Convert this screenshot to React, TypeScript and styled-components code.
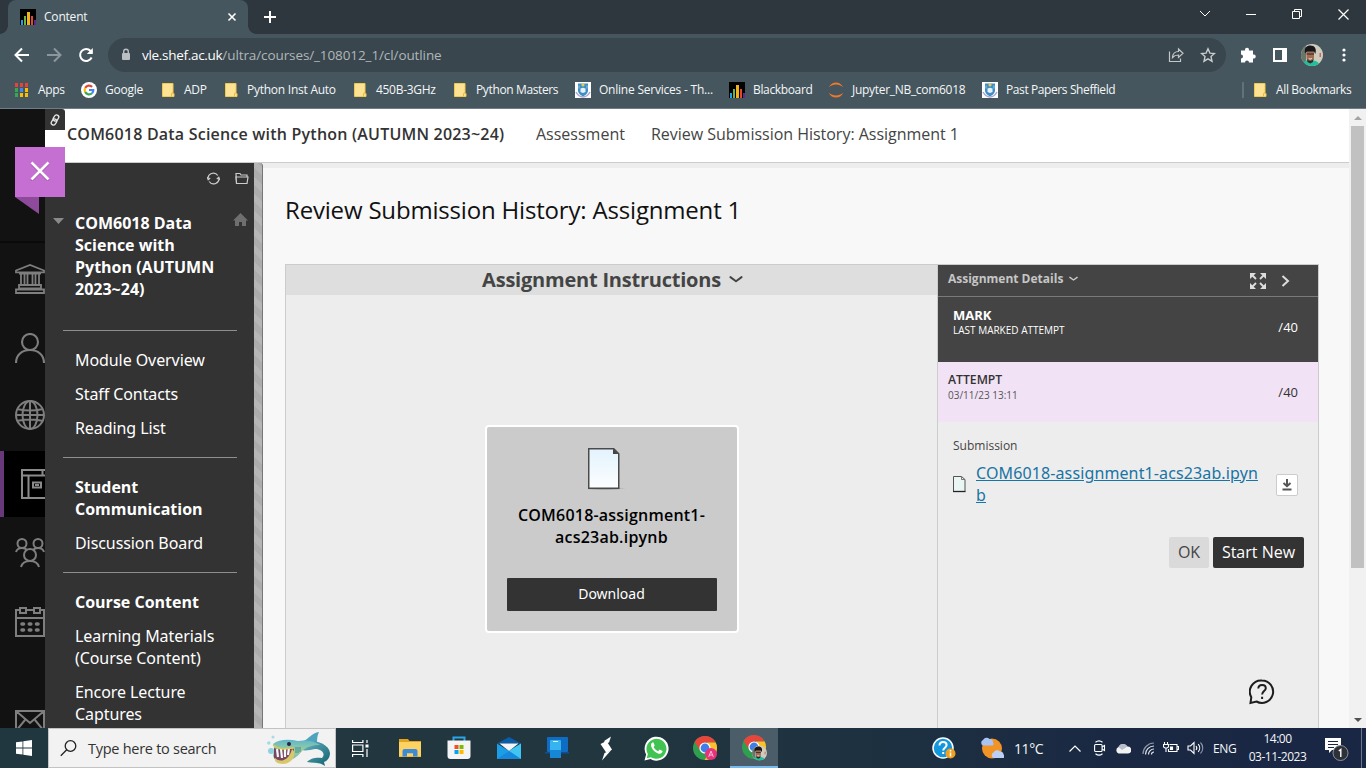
import React from "react";
import styled, { createGlobalStyle } from "styled-components";

const Global = createGlobalStyle`
  * { box-sizing: border-box; }
  html, body { margin: 0; padding: 0; overflow: hidden; }
  body { font-family: "Noto Sans", "Open Sans", sans-serif; font-size: 16px; }
  svg { display: block; flex: none; }
  button { font-family: inherit; border: 0; padding: 0; margin: 0; }
`;

const Screen = styled.div`
  width: 1366px;
  height: 768px;
  display: flex;
  flex-direction: column;
  overflow: hidden;
`;

/* ---------- browser chrome ---------- */
const UiText = styled.span<{ $size?: number; $ls?: number; $color?: string }>`
  font-family: "Open Sans", sans-serif;
  font-size: ${(p) => p.$size ?? 12}px;
  letter-spacing: ${(p) => p.$ls ?? 0}px;
  color: ${(p) => p.$color ?? "#f4f6f7"};
  white-space: pre;
`;

const TabStrip = styled.div`
  height: 34px;
  flex: none;
  display: flex;
  background: #2d373d;
  padding-left: 8px;
`;
const Tab = styled.div`
  width: 240px;
  height: 34px;
  display: flex;
  align-items: center;
  background: #46565f;
  border-radius: 8px 8px 0 0;
  padding: 0 11px 0 12px;
  position: relative;
  &::before, &::after {
    content: "";
    position: absolute;
    bottom: 0;
    width: 8px;
    height: 8px;
  }
  &::before { left: -8px; background: radial-gradient(circle at 0 0, transparent 7.5px, #46565f 8px); }
  &::after { right: -8px; background: radial-gradient(circle at 100% 0, transparent 7.5px, #46565f 8px); }
`;
const TabTitle = styled(UiText)`
  flex: 1;
  margin-left: 8px;
  padding-bottom: 1px;
`;
const NewTab = styled.div`
  width: 44px;
  display: flex;
  align-items: center;
  justify-content: center;
`;
const WindowControls = styled.div`
  margin-left: auto;
  display: flex;
`;
const WindowButton = styled.div`
  width: 46px;
  height: 28px;
  display: flex;
  align-items: center;
  justify-content: center;
`;

const Toolbar = styled.div`
  height: 38px;
  flex: none;
  display: flex;
  align-items: center;
  background: #46565f;
  padding-top: 4px;
`;
const NavButtons = styled.div`
  width: 108px;
  display: flex;
  padding-left: 14px;
  gap: 16px;
`;
const Omnibox = styled.div`
  width: 1118px;
  height: 34px;
  border-radius: 17px;
  background: #39464d;
  display: flex;
  align-items: center;
  padding: 0 10px 0 12px;
`;
const Url = styled.div`
  flex: 1;
  margin-left: 10px;
  display: flex;
`;
const OmniActions = styled.div`
  display: flex;
  gap: 16px;
`;
const ToolbarActions = styled.div`
  flex: 1;
  display: flex;
  align-items: center;
  padding-left: 14px;
`;
const Slot = styled.div<{ $w: number }>`
  width: ${(p) => p.$w}px;
  flex: none;
  display: flex;
  align-items: center;
  justify-content: flex-start;
`;

const BookmarkBar = styled.div`
  height: 37px;
  flex: none;
  display: flex;
  background: #46565f;
  border-bottom: 1px solid #6f7d85;
  padding-left: 14px;
`;
const Bookmark = styled.div<{ $w: number }>`
  width: ${(p) => p.$w}px;
  height: 36px;
  flex: none;
  display: flex;
  align-items: center;
  gap: 8px;
`;
const BookmarkLabel = styled(UiText)`
  padding-bottom: 1px;
`;
const AllBookmarks = styled.div`
  margin-left: auto;
  width: 124px;
  height: 36px;
  display: flex;
  align-items: center;
  gap: 8px;
`;
const BookmarkRule = styled.div`
  width: 2px;
  height: 16px;
  background: #63727a;
`;

/* ---------- page ---------- */
const Page = styled.div`
  height: 619px;
  flex: none;
  display: flex;
  position: relative;
  background: #f8f8f8;
  overflow: hidden;
`;
const Rail = styled.nav`
  width: 45px;
  flex: none;
  background: #121212;
  display: flex;
  flex-direction: column;
  gap: 3px;
  overflow: hidden;
`;
const RailHead = styled.div`
  height: 134px;
  flex: none;
  border-bottom: 2px solid #0a0a0a;
`;
const RailItem = styled.div<{ $active?: boolean; $h?: number; $lift?: number; $before?: number }>`
  height: ${(p) => p.$h ?? 66}px;
  flex: none;
  margin-top: ${(p) => p.$before ?? 0}px;
  padding-left: ${(p) => (p.$active ? 17 : 15)}px;
  padding-bottom: ${(p) => p.$lift ?? 0}px;
  display: flex;
  align-items: center;
  background: ${(p) => (p.$active ? "#000" : "transparent")};
  border-left: ${(p) => (p.$active ? "4px solid #68397a" : "0")};
`;
const CloseFlag = styled.div`
  position: absolute;
  left: 15px;
  top: 38px;
  width: 50px;
`;
const CloseButton = styled.div`
  height: 50px;
  background: #c56fd3;
  display: flex;
  align-items: center;
  justify-content: center;
  padding-bottom: 2px;
`;
const FlagFold = styled.div`
  width: 24px;
  height: 17px;
  background: #8e4a9b;
  clip-path: polygon(0 0, 100% 0, 100% 100%);
`;

const Body = styled.div`
  flex: 1;
  display: flex;
  flex-direction: column;
  min-width: 0;
`;
const Crumbs = styled.header`
  height: 54px;
  flex: none;
  display: flex;
  background: #fff;
  border-bottom: 1px solid #ccc;
  line-height: 50px;
  color: #333;
`;
const LinkBadge = styled.div`
  width: 20px;
  height: 21px;
  background: #333;
  border-top-right-radius: 3px;
  display: flex;
  align-items: center;
  justify-content: center;
`;
const Crumb = styled.span<{ $w: number; $bold?: boolean; $ls?: number }>`
  width: ${(p) => p.$w}px;
  flex: none;
  font-family: "Open Sans", sans-serif;
  font-weight: ${(p) => (p.$bold ? 600 : 400)};
  letter-spacing: ${(p) => p.$ls ?? 0}px;
  color: ${(p) => (p.$bold ? "#333" : "#444")};
  white-space: nowrap;
  &:nth-child(2) { margin-left: 2px; }
`;
const Columns = styled.div`
  flex: 1;
  display: flex;
  min-height: 0;
`;
const Sidebar = styled.aside`
  width: 209px;
  flex: none;
  background: #333;
  color: #fff;
  line-height: 22px;
  overflow: hidden;
`;
const SidebarTools = styled.div`
  height: 49px;
  display: flex;
  gap: 15px;
  padding: 9px 0 0 162px;
`;
const CourseTitle = styled.div`
  display: flex;
  align-items: flex-start;
  height: 118px;
  padding-left: 8px;
`;
const CourseName = styled.div`
  width: 148px;
  flex: none;
  margin: 0 10px 0 11px;
  font-weight: 700;
  font-family: "Open Sans", sans-serif;
`;
const Rule = styled.div`
  width: 174px;
  height: 1px;
  margin-left: 18px;
  background: #8e8e8e;
`;
const Menu = styled.div`
  padding: 12px 0 12px 30px;
`;
const MenuItem = styled.div<{ $bold?: boolean }>`
  width: 150px;
  padding: 6px 0;
  font-weight: ${(p) => (p.$bold ? 700 : 400)};
  font-family: ${(p) => (p.$bold ? '"Open Sans"' : '"Noto Sans"')}, sans-serif;
  letter-spacing: ${(p) => (p.$bold ? 0 : -0.08)}px;
`;
const Splitter = styled.div`
  width: 9px;
  flex: none;
  border-right: 1px solid #777;
  border-top-right-radius: 3px;
  background: repeating-linear-gradient(45deg, #b6b6b6 0 6px, #acacac 6px 12px);
`;
const Content = styled.main`
  flex: 1;
  min-width: 0;
  border-top: 5px solid #ededed;
  padding: 0 30px 0 22px;
  display: flex;
  flex-direction: column;
`;
const Title = styled.h1`
  margin: 0;
  height: 96px;
  padding-top: 25px;
  line-height: 33px;
  font-family: "Open Sans", sans-serif;
  font-size: 24px;
  font-weight: 400;
  letter-spacing: -0.18px;
  color: #111;
  white-space: nowrap;
`;
const Panel = styled.section`
  flex: 1;
  display: flex;
  border: 1px solid #ccc;
  border-bottom: 0;
  background: #ededed;
`;
const Viewer = styled.div`
  width: 652px;
  border-right: 1px solid #ccc;
  display: flex;
  flex-direction: column;
  align-items: center;
`;
const ViewerHead = styled.div`
  width: 100%;
  height: 30px;
  background: #dedede;
  color: #444;
  font-family: "Open Sans", sans-serif;
  font-size: 20px;
  letter-spacing: -0.22px;
  font-weight: 700;
  display: flex;
  align-items: center;
  justify-content: center;
  gap: 8px;
  padding: 0 0 2px 2px;
  white-space: nowrap;
`;
const FileCard = styled.div`
  width: 254px;
  height: 208px;
  margin-top: 130px;
  border: 2px solid #fff;
  border-radius: 4px;
  background: #cbcbcb;
  display: flex;
  flex-direction: column;
  align-items: center;
  padding-top: 20px;
`;
const FileName = styled.div`
  margin-top: 13px;
  line-height: 22px;
  font-family: "Open Sans", sans-serif;
  font-weight: 600;
  letter-spacing: 0.21px;
  text-align: center;
  color: #000;
`;
const DownloadButton = styled.button`
  width: 210px;
  height: 33px;
  margin-top: 30px;
  padding-bottom: 2px;
  background: #333;
  color: #fff;
  font-size: 14px;
  border-radius: 1px;
`;
const Details = styled.div`
  flex: 1;
  display: flex;
  flex-direction: column;
  font-family: "Open Sans", sans-serif;
  position: relative;
`;
const DetailsHead = styled.div`
  height: 32px;
  background: #444;
  border-bottom: 1px solid #7a7a7a;
  display: flex;
  align-items: center;
  padding: 0 28px 0 10px;
`;
const DetailsLabel = styled.div`
  flex: 1;
  display: flex;
  align-items: center;
  gap: 6px;
  padding-bottom: 4px;
  font-size: 12px;
  font-weight: 700;
  color: #c6c6c6;
  white-space: nowrap;
`;
const ScoreRow = styled.div<{ $dark?: boolean }>`
  height: ${(p) => (p.$dark ? 65 : 60)}px;
  background: ${(p) => (p.$dark ? "#444" : "#f1e2f5")};
  color: ${(p) => (p.$dark ? "#fff" : "#333")};
  display: flex;
  justify-content: space-between;
  padding: ${(p) => (p.$dark ? "10px 20px 0 15px" : "9px 20px 0 10px")};
`;
const ScoreName = styled.div<{ $bold: number; $size: number }>`
  font-size: ${(p) => p.$size}px;
  line-height: 17px;
  font-weight: ${(p) => p.$bold};
`;
const ScoreSub = styled.div<{ $lh: number; $muted?: boolean }>`
  font-size: 10px;
  line-height: ${(p) => p.$lh}px;
  color: ${(p) => (p.$muted ? "#555" : "inherit")};
`;
const Score = styled.div<{ $top: number }>`
  font-size: 13px;
  line-height: 18px;
  padding-top: ${(p) => p.$top}px;
`;
const Submission = styled.div`
  padding: 15px 20px 0 15px;
`;
const SubmissionLabel = styled.div`
  font-size: 12px;
  line-height: 18px;
  color: #444;
`;
const FileRow = styled.div`
  display: flex;
  align-items: center;
  height: 44px;
  margin-top: 7px;
`;
const FileLink = styled.a`
  width: 286px;
  margin-left: 9px;
  font-family: "Noto Sans", sans-serif;
  line-height: 22px;
  letter-spacing: 0.12px;
  color: #1874a4;
  text-decoration: underline;
  word-break: break-all;
`;
const SaveButton = styled.div`
  width: 22px;
  height: 22px;
  margin: 2px 0 0 auto;
  background: #fff;
  border: 1px solid #ccc;
  border-radius: 2px;
  display: flex;
  align-items: center;
  justify-content: center;
`;
const Actions = styled.div`
  display: flex;
  justify-content: flex-end;
  gap: 4px;
  padding: 31px 14px 0 0;
`;
const ActionButton = styled.button<{ $w: number; $dark?: boolean }>`
  width: ${(p) => p.$w}px;
  height: 31px;
  padding-bottom: 2px;
  border-radius: 2px;
  font-size: 16px;
  background: ${(p) => (p.$dark ? "#333" : "#dadada")};
  color: ${(p) => (p.$dark ? "#fff" : "#444")};
  white-space: nowrap;
`;
const HelpBubble = styled.div`
  position: absolute;
  right: 43px;
  bottom: 23px;
`;
const Scrollbar = styled.div`
  width: 17px;
  flex: none;
  background: #f1f1f1;
  display: flex;
  flex-direction: column;
  align-items: center;
  justify-content: space-between;
`;
const ScrollThumb = styled.div`
  width: 13px;
  height: 442px;
  background: #c1c1c1;
  margin-bottom: auto;
`;
const ScrollArrow = styled.div<{ $down?: boolean }>`
  height: 17px;
  display: flex;
  align-items: center;
  &::after {
    content: "";
    border: 4px solid transparent;
    border-top-width: ${(p) => (p.$down ? 4 : 0)}px;
    border-bottom-width: ${(p) => (p.$down ? 0 : 4)}px;
    border-top-color: ${(p) => (p.$down ? "#505050" : "transparent")};
    border-bottom-color: ${(p) => (p.$down ? "transparent" : "#a3a3a3")};
  }
`;

/* ---------- taskbar ---------- */
const Taskbar = styled.footer`
  height: 40px;
  flex: none;
  display: flex;
  background: linear-gradient(90deg, #213740 0, #22363f 45%, #1d3041 66%, #1a2843 82%, #192745 100%);
`;
const TaskSlot = styled.div<{ $w: number; $active?: boolean }>`
  width: ${(p) => p.$w}px;
  height: 40px;
  flex: none;
  display: flex;
  align-items: center;
  justify-content: center;
  background: ${(p) => (p.$active ? "#4b5d68" : "transparent")};
  border-bottom: ${(p) => (p.$active ? "2px solid #76b9ed" : "0")};
  padding-top: ${(p) => (p.$active ? "2px" : "0")};
`;
const Search = styled.div`
  width: 288px;
  height: 40px;
  flex: none;
  display: flex;
  align-items: center;
  background: #f2f2f2;
  border: 1px solid #c3c3c3;
  padding: 0 4px 0 11px;
`;
const Placeholder = styled(UiText)`
  flex: 1;
  margin-left: 11px;
`;
const Clock = styled.div`
  width: 85px;
  margin-right: 2px;
  display: flex;
  flex-direction: column;
  align-items: center;
  justify-content: center;
  line-height: 18px;
`;
const DesktopEdge = styled.div`
  width: 1px;
  height: 40px;
  margin-left: 11px;
  background: #6c7588;
`;

/* ---------- icons ---------- */
const BarsIcon = () => (
  <svg width="16" height="16" viewBox="0 0 16 16" shapeRendering="crispEdges">
    <rect width="16" height="16" fill="#000" />
    <rect x="1" y="11" width="2" height="5" fill="#18a0e8" />
    <rect x="4" y="7" width="2" height="9" fill="#6db33f" />
    <rect x="7" y="3" width="3" height="13" fill="#f2b21b" />
    <rect x="11" y="7" width="2" height="9" fill="#e4472b" />
    <rect x="14" y="11" width="2" height="5" fill="#5b2a91" />
  </svg>
);
const NoteIcon = () => (
  <svg width="16" height="16" viewBox="0 0 16 16">
    <path d="M2.500 1.500h10.500v10h1v3h-11.500z" fill="#fde293" stroke="#f2c94f" />
    <path d="M11.500 14.500v-2.500a1 1 0 0 1 2 0" fill="none" stroke="#e8b93a" />
  </svg>
);
const CrestIcon = () => (
  <svg width="16" height="16" viewBox="0 0 16 16">
    <rect width="16" height="16" fill="#fff" />
    <path d="M3 1.500h10v7c0 3-3 5-5 6-2-1-5-3-5-6z" fill="#3f8fc4" />
    <path d="M1 10c2 3.500 4.500 5 7 5s5-1.500 7-5" fill="none" stroke="#aaa5cf" strokeWidth="1.500" />
    <path d="M5.500 6.500l2.500-.8 2.500.8V10L8 11l-2.500-1z" fill="#e6f1f8" />
    <path d="M8 1.500v3M6.500 3h3" stroke="#f3d44a" strokeWidth="1.300" />
    <path d="M4 3.500v3M12 3.500v3" stroke="#8fc3e3" />
  </svg>
);
const AppsIcon = () => {
  const colors = ["#ea4335", "#ea4335", "#ea4335", "#34a853", "#4285f4", "#fbbc04", "#34a853", "#fbbc04", "#fbbc04"];
  return (
    <svg width="16" height="16" viewBox="0 0 16 16" shapeRendering="crispEdges">
      {colors.map((c, i) => (
        <rect key={i} x={1 + (i % 3) * 5} y={1 + Math.floor(i / 3) * 5} width="3" height="4" fill={c} />
      ))}
    </svg>
  );
};
const GoogleIcon = () => (
  <svg width="16" height="16" viewBox="0 0 16 16">
    <circle cx="8" cy="8" r="8" fill="#fff" />
    <g fill="none" strokeWidth="2.200">
      <path d="M11.100 4.900A4.400 4.400 0 0 0 4.200 5.900" stroke="#ea4335" />
      <path d="M4.200 5.900a4.400 4.400 0 0 0 0 4.200" stroke="#fbbc04" />
      <path d="M4.200 10.100a4.400 4.400 0 0 0 6.800 1.100" stroke="#34a853" />
      <path d="M11 11.200A4.400 4.400 0 0 0 12.300 8H8" stroke="#4285f4" />
    </g>
  </svg>
);
const JupyterIcon = () => (
  <svg width="16" height="16" viewBox="0 0 16 16" fill="#f37726">
    <path d="M.8 5.300C2.300 2 5 .4 8 .4s5.700 1.600 7.200 4.900C13 3.500 10.500 2.600 8 2.600S3 3.500.8 5.300z" />
    <path d="M.8 10.700c1.500 3.300 4.200 4.900 7.200 4.900s5.700-1.600 7.200-4.900C13 12.500 10.500 13.400 8 13.400s-5-.9-7.200-2.700z" />
  </svg>
);
const Portrait = ({ size }: { size: number }) => (
  <svg width={size} height={size} viewBox="0 0 22 22">
    <defs>
      <clipPath id={`face${size}`}><circle cx="11" cy="11" r="11" /></clipPath>
    </defs>
    <g clipPath={`url(#face${size})`}>
      <rect width="22" height="22" fill="#cfccbb" />
      <rect width="5" height="22" fill="#69776b" />
      <path d="M18.500 9h1.500v4h-1.500z" fill="#c06a70" />
      <path d="M2 22c0-4 2-6 6-6s10 .5 11 6z" fill="#1fc0a0" />
      <path d="M5.500 7h7.500v6c0 3.500-1.700 5.500-3.700 5.500S5.500 16.500 5.500 13z" fill="#a06c52" />
      <path d="M4 9.500c-1-5.500 1.500-8 5.500-8s6.500 3 4.800 8.500L13 7.500H6z" fill="#17161a" />
      <path d="M5.500 9.500h7.500v1H5.500z" fill="#2a2225" />
      <path d="M6 14.500c1 3 5.500 3 6.500 0l-.5 3.500-2.700 1.500L6.500 18z" fill="#3a2722" />
      <path d="M7.800 14.500c1 .7 2 .7 3 0" stroke="#fff" fill="none" />
    </g>
  </svg>
);
const ChromeIcon = () => (
  <>
    <circle cx="12" cy="12" r="12" fill="#2f9e4f" />
    <path d="M12 6.500h10.700A12 12 0 0 0 1.700 5.900l5.500 8.900z" fill="#e8453c" />
    <path d="M22.700 6.500A12 12 0 0 1 11.600 24l5.200-9.200L14 6.500z" fill="#fbc02d" />
    <circle cx="12" cy="12" r="5.600" fill="#fff" />
    <circle cx="12" cy="12" r="4.400" fill="#3f7ee8" />
  </>
);

const BankIcon = () => (
  <svg width="30" height="30" viewBox="0 0 30 30" fill="none" stroke="#7e7e7e" strokeWidth="1.800">
    <path d="M1 6.500L15 1l14 5.500v1.800H1zM4 9.700h22" />
    <path d="M6 10v10M9.500 10v10M12.500 10v10M17.500 10v10M20.500 10v10M24 10v10" />
    <path d="M4 21h22v3.500H4zM1 25.500h28V29H1z" />
  </svg>
);
const PersonIcon = () => (
  <svg width="30" height="30" viewBox="0 0 30 30" fill="none" stroke="#7e7e7e" strokeWidth="2.100">
    <circle cx="15" cy="9" r="8" />
    <path d="M1 30c0-8 6-13 14-13s14 5 14 13" />
  </svg>
);
const GlobeIcon = () => (
  <svg width="30" height="30" viewBox="0 0 30 30" fill="none" stroke="#7e7e7e" strokeWidth="2">
    <circle cx="15" cy="15" r="14" />
    <ellipse cx="15" cy="15" rx="7.500" ry="14" />
    <path d="M15 1v28M1 15h28M3 9.300c7 1.500 17 1.500 24 0M3 20.700c7-1.500 17-1.500 24 0" />
  </svg>
);
const BookIcon = () => (
  <svg width="30" height="30" viewBox="0 0 30 30" fill="none" stroke="#8a8a8a" strokeWidth="2">
    <path d="M29 1H1v28h28M1 6.500h28M7.500 6.500V29M21.500 1v5.500M12 13.500h8v5h-8zM14 16h4" />
  </svg>
);
const PeopleIcon = () => (
  <svg width="30" height="30" viewBox="0 0 30 30" fill="none" stroke="#7e7e7e" strokeWidth="2">
    <circle cx="7" cy="5.500" r="4.500" />
    <circle cx="23" cy="5.500" r="4.500" />
    <circle cx="15" cy="17" r="6" />
    <path d="M1 14c.8-2.600 3-4 6-4 2.400 0 4 .8 5 2M29 14c-.8-2.600-3-4-6-4-2.400 0-4 .8-5 2M6 29c1-3.700 4.500-6 9-6s8 2.300 9 6" />
  </svg>
);
const CalendarIcon = () => (
  <svg width="30" height="30" viewBox="0 0 30 30" fill="none" stroke="#7e7e7e" strokeWidth="2">
    <path d="M5 3H1v26h28V3h-4M12 3h6M1 11h28M5 1h6v5H5zM19 1h6v5h-6z" />
    <path d="M7 17h1.500M14.300 17h1.500M21.500 17h1.500M7 23h1.500M14.300 23h1.500M21.500 23h1.500" strokeWidth="3.600" strokeLinecap="round" />
  </svg>
);
const MailIcon = () => (
  <svg width="30" height="30" viewBox="0 0 30 30" fill="none" stroke="#7e7e7e" strokeWidth="2">
    <path d="M1 1h28v22H1zM1 1l14 12L29 1M1 21l9-11M29 21l-9-11" />
  </svg>
);
const ChevronDown = ({ w, color, sw }: { w: number; color: string; sw: number }) => (
  <svg width={w} height={w * 0.6} viewBox="0 0 10 6" fill="none" stroke={color} strokeWidth={sw}>
    <path d="M1 1.500l4 3 4-3" strokeLinecap="round" strokeLinejoin="round" />
  </svg>
);

const SharkIcon = () => (
  <svg width="64" height="36" viewBox="0 0 64 36">
    <defs>
      <linearGradient id="skin" x1="0" y1="0" x2="0" y2="1">
        <stop offset="0" stopColor="#5bb6cf" />
        <stop offset=".5" stopColor="#9fcf98" />
        <stop offset="1" stopColor="#6cb6bd" />
      </linearGradient>
      <linearGradient id="tail" x1="0" y1="0" x2="1" y2="1">
        <stop offset="0" stopColor="#6ab8c8" />
        <stop offset="1" stopColor="#12616e" />
      </linearGradient>
    </defs>
    <path d="M37 11c4-2 8-8 15-9-2 4-2 8-2 12z" fill="#4ea3bd" />
    <path d="M34 11c12-2 28 2 29 12 0 5-3 8-6 9l1 4c-5-4-12-3-18-4 3-4 10-5 15-4 4-4 0-9-7-9-5 1-9 2-14 1z" fill="url(#tail)" />
    <path d="M6 14c6-5 16-5 25-3 8-1 17 0 22 4-7 0-13 2-17 5-4 5-9 10-17 11-7 1-12-2-13-5l1-9z" fill="url(#skin)" />
    <path d="M7 18c7 3 15 1 20 0 0 8-4 13-10 13-5 0-10-1-10-4z" fill="#7b4560" />
    <path d="M8 28c5 5 14 3 17-9 6 5 0 15-9 15-5 0-9-2-8-6z" fill="#d8c869" />
    <path d="M10 19l1 8M14 19l1 9M18 19l0 8M22 18l-1 7" stroke="#effafa" strokeWidth="2.200" fill="none" />
    <path d="M6 15c6 5 13 4 21 3" stroke="#d6c85f" strokeWidth="1.500" fill="none" />
    <circle cx="22" cy="14" r="2" fill="#2a2440" />
    <path d="M29 17v6M31 17v6M33 17v5" stroke="#39899d" />
    <circle cx="4" cy="21" r="3" fill="#8fd0df" />
    <circle cx="1.800" cy="13" r="1.800" fill="#a5dbe6" />
    <circle cx="6" cy="7" r="1.500" fill="#a5dbe6" />
  </svg>
);

const bookmarks: { label: string; w: number; icon: React.ReactNode; ls: number }[] = [
  { label: "Apps", w: 67, icon: <AppsIcon />, ls: -0.3 },
  { label: "Google", w: 79, icon: <GoogleIcon />, ls: -0.25 },
  { label: "ADP", w: 63, icon: <NoteIcon />, ls: -0.3 },
  { label: "Python Inst Auto", w: 129, icon: <NoteIcon />, ls: -0.25 },
  { label: "450B-3GHz", w: 100, icon: <NoteIcon />, ls: -0.3 },
  { label: "Python Masters", w: 123, icon: <NoteIcon />, ls: -0.37 },
  { label: "Online Services - Th...", w: 154, icon: <CrestIcon />, ls: -0.22 },
  { label: "Blackboard", w: 99, icon: <BarsIcon />, ls: -0.35 },
  { label: "Jupyter_NB_com6018", w: 154, icon: <JupyterIcon />, ls: -0.3 },
  { label: "Past Papers Sheffield", w: 150, icon: <CrestIcon />, ls: -0.4 },
];

export default function App() {
  return (
    <Screen>
      <Global />
      <TabStrip>
        <Tab>
          <BarsIcon />
          <TabTitle $ls={-0.2}>Content</TabTitle>
          <svg width="10" height="10" viewBox="0 0 10 10" stroke="#fff" strokeWidth="1.600"><path d="M1.500 1.500l7 7M8.500 1.500l-7 7" /></svg>
        </Tab>
        <NewTab>
          <svg width="12" height="12" viewBox="0 0 12 12" stroke="#fff" strokeWidth="2"><path d="M6 0v12M0 6h12" /></svg>
        </NewTab>
        <WindowControls>
          <WindowButton><svg width="12" height="8" viewBox="0 0 12 8" fill="none" stroke="#fff"><path d="M1 1l5 5 5-5" /></svg></WindowButton>
          <WindowButton><svg width="10" height="2" viewBox="0 0 10 2"><path d="M0 1.500h10" stroke="#fff" /></svg></WindowButton>
          <WindowButton><svg width="10" height="10" viewBox="0 0 10 10" fill="none" stroke="#fff"><path d="M.5 2.500h7v7h-7zM2.500 2.500v-2h7v7h-2" /></svg></WindowButton>
          <WindowButton><svg width="11" height="11" viewBox="0 0 11 11" stroke="#fff" strokeWidth="1.200"><path d="M.5.5l10 10M10.500.5l-10 10" /></svg></WindowButton>
        </WindowControls>
      </TabStrip>

      <Toolbar>
        <NavButtons>
          <svg width="16" height="16" viewBox="0 0 16 16" fill="none" stroke="#fff" strokeWidth="2"><path d="M15 8H2M8 1.500L1.500 8 8 14.500" /></svg>
          <svg width="16" height="16" viewBox="0 0 16 16" fill="none" stroke="#8c979d" strokeWidth="2"><path d="M1 8h13M8 1.500L14.500 8 8 14.500" /></svg>
          <svg width="16" height="16" viewBox="0 0 16 16" fill="none" stroke="#fff" strokeWidth="2"><path d="M13.600 10.500A6 6 0 1 1 12.600 4L14 5.500" /><path d="M14.800 1v6h-6z" fill="#fff" stroke="none" /></svg>
        </NavButtons>
        <Omnibox>
          <svg width="12" height="14" viewBox="0 0 12 14"><rect x="2" y="5" width="8" height="7" rx="1" fill="#b9bfc3" /><path d="M3.700 6V3.500a2.300 2.300 0 0 1 4.600 0V6" fill="none" stroke="#b9bfc3" strokeWidth="1.400" /></svg>
          <Url>
            <UiText $size={13.5} $ls={-0.3} $color="#fff">vle.shef.ac.uk</UiText>
            <UiText $size={13.5} $ls={-0.1} $color="#b0b6ba">/ultra/courses/_108012_1/cl/outline</UiText>
          </Url>
          <OmniActions>
            <svg width="16" height="16" viewBox="0 0 16 16" fill="none" stroke="#c2c7ca" strokeWidth="1.200"><path d="M1.500 4.500v10h11v-3M4.500 10.500c.3-4 2.500-6 6-6V2l4.500 4.200-4.500 4.200V8c-2.700 0-4.500.7-6 2.500z" /></svg>
            <svg width="16" height="16" viewBox="0 0 16 16" fill="none" stroke="#c9cdd0" strokeWidth="1.400"><path d="M8 1.800l1.900 4.300 4.600.4-3.500 3.100 1 4.600L8 11.800l-4 2.400 1-4.600L1.500 6.500l4.600-.4z" /></svg>
          </OmniActions>
        </Omnibox>
        <ToolbarActions>
          <Slot $w={33}><svg width="16" height="16" viewBox="0 0 16 16" fill="#fff"><path d="M1 3.500h4.200a2 2 0 1 1 3.600 0H13v4a2.100 2.100 0 1 1 0 4v4H9a2 2 0 1 0-4 0H1v-4a2 2 0 1 0 0-4z" /></svg></Slot>
          <Slot $w={28}><svg width="14" height="14" viewBox="0 0 14 14"><path d="M1 1h12v12H1z" fill="none" stroke="#fff" strokeWidth="2" /><path d="M9 1h4v12H9z" fill="#fff" /></svg></Slot>
          <Slot $w={41}><Portrait size={22} /></Slot>
          <svg width="4" height="14" viewBox="0 0 4 14" fill="#fff"><circle cx="2" cy="2" r="1.600" /><circle cx="2" cy="7" r="1.600" /><circle cx="2" cy="12" r="1.600" /></svg>
        </ToolbarActions>
      </Toolbar>

      <BookmarkBar>
        {bookmarks.map((b) => (
          <Bookmark key={b.label} $w={b.w}>
            {b.icon}
            <BookmarkLabel $ls={b.ls}>{b.label}</BookmarkLabel>
          </Bookmark>
        ))}
        <AllBookmarks>
          <BookmarkRule />
          <NoteIcon />
          <BookmarkLabel $ls={-0.35}>All Bookmarks</BookmarkLabel>
        </AllBookmarks>
      </BookmarkBar>

      <Page>
        <Rail>
          <RailHead />
          <RailItem><BankIcon /></RailItem>
          <RailItem><PersonIcon /></RailItem>
          <RailItem $h={64} $lift={2}><GlobeIcon /></RailItem>
          <RailItem $active><BookIcon /></RailItem>
          <RailItem><PeopleIcon /></RailItem>
          <RailItem><CalendarIcon /></RailItem>
          <RailItem $before={34}><MailIcon /></RailItem>
        </Rail>
        <Body>
          <Crumbs>
            <LinkBadge>
              <svg width="12" height="12" viewBox="0 0 12 12" fill="none" stroke="#e6e6e6" strokeWidth="1.300">
                <rect x="4.800" y=".8" width="4.400" height="6.400" rx="2.200" transform="rotate(35 7 4)" />
                <rect x="2.800" y="4.800" width="4.400" height="6.400" rx="2.200" transform="rotate(35 5 8)" />
              </svg>
            </LinkBadge>
            <Crumb $w={469} $bold $ls={0.21}>COM6018 Data Science with Python (AUTUMN 2023~24)</Crumb>
            <Crumb $w={115}>Assessment</Crumb>
            <Crumb $w={320} $ls={-0.02}>Review Submission History: Assignment 1</Crumb>
          </Crumbs>
          <Columns>
            <Sidebar>
              <SidebarTools>
                <svg width="13" height="13" viewBox="0 0 13 13" fill="none" stroke="#ccc" strokeWidth="1.200"><path d="M1.200 7.500A5.300 5.300 0 0 1 10.800 3.500M11.800 5.500A5.300 5.300 0 0 1 2.200 9.500M.2 5l1 2.700 2-1.700M12.800 8l-1-2.700-2 1.700" /></svg>
                <svg width="14" height="13" viewBox="0 0 14 13" fill="none" stroke="#ccc" strokeWidth="1.200"><path d="M1.500 11.500L1 1.500h4l1 1.500h6v2M1.500 11.500h10.500l1-6.500H.8z" /></svg>
              </SidebarTools>
              <CourseTitle>
                <svg width="11" height="14" viewBox="0 0 11 14"><path d="M0 6h11l-5.500 6z" fill="#8a8a8a" /></svg>
                <CourseName>COM6018 Data Science with Python (AUTUMN 2023~24)</CourseName>
                <svg width="15" height="15" viewBox="0 0 15 15"><path d="M7.500 1L15 8.500h-2V14H9v-4H6v4H2V8.500H0z" fill="#6f6f6f" /></svg>
              </CourseTitle>
              <Rule />
              <Menu>
                <MenuItem>Module Overview</MenuItem>
                <MenuItem>Staff Contacts</MenuItem>
                <MenuItem>Reading List</MenuItem>
              </Menu>
              <Rule />
              <Menu>
                <MenuItem $bold>Student Communication</MenuItem>
                <MenuItem>Discussion Board</MenuItem>
              </Menu>
              <Rule />
              <Menu>
                <MenuItem $bold>Course Content</MenuItem>
                <MenuItem>Learning Materials (Course Content)</MenuItem>
                <MenuItem>Encore Lecture Captures</MenuItem>
              </Menu>
            </Sidebar>
            <Splitter />
            <Content>
              <Title>Review Submission History: Assignment 1</Title>
              <Panel>
                <Viewer>
                  <ViewerHead>
                    Assignment Instructions
                    <ChevronDown w={14} color="#444" sw={1.4} />
                  </ViewerHead>
                  <FileCard>
                    <svg width="48" height="44" viewBox="0 0 48 44">
                      <defs>
                        <linearGradient id="sheet" x1="0" y1="0" x2="0" y2="1"><stop offset="0" stopColor="#e2f3fd" /><stop offset="1" stopColor="#fdfeff" /></linearGradient>
                        <radialGradient id="shade"><stop offset="0" stopColor="#777" /><stop offset="1" stopColor="#cbcbcb" /></radialGradient>
                      </defs>
                      <ellipse cx="16" cy="41.500" rx="22" ry="1.800" fill="url(#shade)" />
                      <path d="M.750 1.750h25l5 5v34.500h-30z" fill="url(#sheet)" stroke="#4a4a4a" strokeWidth="1.500" />
                      <path d="M25 1.500v5.500h5.500z" fill="#444" />
                    </svg>
                    <FileName>COM6018-assignment1-<br />acs23ab.ipynb</FileName>
                    <DownloadButton>Download</DownloadButton>
                  </FileCard>
                </Viewer>
                <Details>
                  <DetailsHead>
                    <DetailsLabel>
                      Assignment Details
                      <ChevronDown w={9} color="#c6c6c6" sw={1.6} />
                    </DetailsLabel>
                    <Slot $w={31}>
                      <svg width="16" height="16" viewBox="0 0 16 16" fill="#ddd" stroke="#ddd" strokeWidth="1.800">
                        <path d="M0 0h6L0 6zM16 0v6l-6-6zM0 16v-6l6 6zM16 16h-6l6-6z" stroke="none" />
                        <path d="M2 2l4 4M14 2l-4 4M2 14l4-4M14 14l-4-4" />
                      </svg>
                    </Slot>
                    <svg width="9" height="12" viewBox="0 0 9 12" fill="none" stroke="#ddd" strokeWidth="2"><path d="M1.500 1l5.500 5-5.500 5" /></svg>
                  </DetailsHead>
                  <ScoreRow $dark>
                    <div>
                      <ScoreName $bold={700} $size={13}>MARK</ScoreName>
                      <ScoreSub $lh={12}>LAST MARKED ATTEMPT</ScoreSub>
                    </div>
                    <Score $top={11}>/40</Score>
                  </ScoreRow>
                  <ScoreRow>
                    <div>
                      <ScoreName $bold={600} $size={12.2}>ATTEMPT</ScoreName>
                      <ScoreSub $lh={14} $muted>03/11/23 13:11</ScoreSub>
                    </div>
                    <Score $top={12}>/40</Score>
                  </ScoreRow>
                  <Submission>
                    <SubmissionLabel>Submission</SubmissionLabel>
                    <FileRow>
                      <svg width="14" height="18" viewBox="0 0 14 18"><path d="M.5 1.500h8l3.500 3v12H.5z" fill="#eaf6f4" stroke="#555" /><path d="M0 16.500h12.500" stroke="#222" strokeWidth="1.300" /><path d="M8.500 1.500v3H12" fill="none" stroke="#777" /></svg>
                      <FileLink>COM6018-assignment1-acs23ab.ipynb</FileLink>
                      <SaveButton>
                        <svg width="10" height="12" viewBox="0 0 10 12" fill="none" stroke="#555" strokeWidth="2"><path d="M5 0v7M1.500 4L5 7.200 8.500 4M.5 10.500h9" /></svg>
                      </SaveButton>
                    </FileRow>
                  </Submission>
                  <Actions>
                    <ActionButton $w={40}>OK</ActionButton>
                    <ActionButton $w={91} $dark>Start New</ActionButton>
                  </Actions>
                  <HelpBubble>
                    <svg width="26" height="26" viewBox="0 0 26 26" fill="none" stroke="#1d1d1d" strokeWidth="2">
                      <path d="M13 1.500a11.200 11.200 0 1 1-5.500 21L1.500 24l.8-5.800A11.200 11.200 0 0 1 13 1.500z" />
                      <path d="M9.300 9.600c0-2.300 1.600-3.700 3.800-3.700 2.100 0 3.700 1.300 3.700 3.300 0 2.800-3.700 3-3.700 6.300M13.100 17.800v2.200" />
                    </svg>
                  </HelpBubble>
                </Details>
              </Panel>
            </Content>
          </Columns>
        </Body>
        <Scrollbar>
          <ScrollArrow />
          <ScrollThumb />
          <ScrollArrow $down />
        </Scrollbar>
        <CloseFlag>
          <CloseButton>
            <svg width="20" height="20" viewBox="0 0 20 20" fill="none"><path d="M1.500 2.500l17 17M18.500 2.500l-17 17" stroke="#9a4aa8" strokeWidth="2.500" /><path d="M1.500 1.500l17 17M18.500 1.500l-17 17" stroke="#fff" strokeWidth="2.500" /></svg>
          </CloseButton>
          <FlagFold />
        </CloseFlag>
      </Page>

      <Taskbar>
        <TaskSlot $w={48}>
          <svg width="16" height="16" viewBox="0 0 16 16" fill="#fff"><path d="M0 2.300L6.500 1.400v6.100H0zM7.300 1.300L16 0v7.500H7.300zM0 8.400h6.500v6.200L0 13.700zM7.300 8.400H16V16l-8.700-1.300z" /></svg>
        </TaskSlot>
        <Search>
          <svg width="17" height="17" viewBox="0 0 17 17" fill="none" stroke="#222" strokeWidth="1.300"><circle cx="10.500" cy="6" r="5.300" /><path d="M6.700 9.800L.8 15.700" /></svg>
          <Placeholder $size={14.5} $ls={-0.27} $color="#333">Type here to search</Placeholder>
          <SharkIcon />
        </Search>
        <TaskSlot $w={49}>
          <svg width="17" height="17" viewBox="0 0 17 17" fill="none" stroke="#fff" strokeWidth="1.200"><path d="M.6 0v2.500h10.300V0M.6 5h10.300v6.500H.6zM.6 17v-2.500h10.300V17M15 0v3M15 9v8" /><rect x="13.500" y="4.500" width="3" height="3" fill="#fff" stroke="none" /></svg>
        </TaskSlot>
        <TaskSlot $w={50}>
          <svg width="22" height="20" viewBox="0 0 22 20"><path d="M0 1h9l1.500 2H22v16H0z" fill="#e3a21b" /><path d="M0 4h22v14.500H0z" fill="#fcd363" /><path d="M3.500 18.500V13a2 2 0 0 1 2-2h11a2 2 0 0 1 2 2v5.500H14v-3.300H8v3.300z" fill="#3d8bd6" /></svg>
        </TaskSlot>
        <TaskSlot $w={48}>
          <svg width="24" height="24" viewBox="0 0 24 24"><path d="M6.500 5V1.500h11V5" fill="none" stroke="#2aa5e8" strokeWidth="2" /><path d="M.5 4.500h23V20a3 3 0 0 1-3 3h-17a3 3 0 0 1-3-3z" fill="#f4f4f4" /><path d="M7.500 9h4v4h-4z" fill="#f25022" /><path d="M12.500 9h4v4h-4z" fill="#7fba00" /><path d="M7.500 14h4v4h-4z" fill="#00a4ef" /><path d="M12.500 14h4v4h-4z" fill="#ffb900" /></svg>
        </TaskSlot>
        <TaskSlot $w={51}>
          <svg width="24" height="22" viewBox="0 0 24 22"><path d="M0 6.500L12 0l12 6.500z" fill="#0b5cab" /><path d="M0 6.500L12 14l12-7.500V22H0z" fill="#1b9de8" /><path d="M24 6.500V22L12 14z" fill="#3fc6f2" /><path d="M2.500 6.500h19L12 14z" fill="#f3f6f9" /><path d="M0 22l12-8 12 8z" fill="#1689dc" /></svg>
        </TaskSlot>
        <TaskSlot $w={46}>
          <svg width="24" height="22" viewBox="0 0 24 22"><rect x="2" width="21" height="15" rx="1" fill="#0f6cc4" /><path d="M0 15h24v1.500H0z" fill="#0c4f94" /><rect x="5" y="3" width="11" height="18" rx="1" fill="#37b4f0" /><rect x="5" y="13" width="11" height="8" fill="#1587d6" /><path d="M8 4.500h5" stroke="#d7f1ff" /></svg>
        </TaskSlot>
        <TaskSlot $w={52}>
          <svg width="13" height="25" viewBox="0 0 13 25" fill="#fff"><path d="M11 .5L4.500 4.800 4 8l5-1.500z" /><path d="M.5 8l6-3 5.500 8.500-5.500 3.500z" /><path d="M12 13.300L2 24.500 4.500 17l5-2z" /></svg>
        </TaskSlot>
        <TaskSlot $w={48}>
          <svg width="25" height="25" viewBox="0 0 25 25"><path d="M.5 24.500l1.600-6A12 12 0 1 1 6.500 23z" fill="#fff" /><path d="M2.700 22.300l1.200-4.300A10 10 0 1 1 7 21.200z" fill="#41c352" /><path d="M8.300 6.500c-1.600 1.200-1.700 3.200-.4 5.500 1.500 2.700 3.800 4.900 6.700 5.700 2 .6 3.700-.5 4-2.600l-3-1.500-1.400 1.600c-2-.8-3.800-2.500-4.600-4.300l1.100-1.500-1.200-2.900z" fill="#fff" /></svg>
        </TaskSlot>
        <TaskSlot $w={50}>
          <svg width="24" height="24" viewBox="0 0 24 24"><ChromeIcon /><circle cx="18" cy="18" r="6" fill="#e8327c" /><path d="M15.700 20.800L18 15l2.300 5.800M16.500 19h3" fill="none" stroke="#f7c3d8" /></svg>
        </TaskSlot>
        <TaskSlot $w={48} $active>
          <svg width="26" height="26" viewBox="0 0 26 26"><g transform="translate(1 0)"><ChromeIcon /></g><g transform="translate(11 10.500)"><Portrait size={15} /></g></svg>
        </TaskSlot>
        <TaskSlot $w={140} />
        <TaskSlot $w={52}>
          <svg width="24" height="22" viewBox="0 0 24 22"><circle cx="11" cy="11" r="10" fill="#1396dc" stroke="#fff" strokeWidth="1.500" /><path d="M7.500 8.500c0-2.200 1.500-3.500 3.600-3.500s3.500 1.200 3.500 3.100c0 2.500-3.400 2.700-3.400 5.300M11.200 15v2" fill="none" stroke="#fff" strokeWidth="2" /><circle cx="18.500" cy="16.500" r="5" fill="#f0a020" /><path d="M18.500 15.500v4M18.500 13v1.500" stroke="#fff" strokeWidth="1.500" /></svg>
        </TaskSlot>
        <TaskSlot $w={44}>
          <svg width="24" height="22" viewBox="0 0 24 22"><circle cx="12" cy="11.500" r="10" fill="#f29326" /><path d="M3 8.500a3 3 0 0 1 0-5.500 4 4 0 0 1 6.500-1 3 3 0 0 1 3.500 3.500 1.800 1.800 0 0 1-.5 3z" fill="#a9c3f2" /><path d="M13.500 21a3 3 0 0 1 0-5.500 4 4 0 0 1 6.500-1 3 3 0 0 1 3.500 3 1.800 1.800 0 0 1-.5 3.500z" fill="#bcd0f5" /></svg>
        </TaskSlot>
        <Slot $w={55}><UiText $size={14} $ls={-0.4}>11°C</UiText></Slot>
        <Slot $w={25}><svg width="12" height="7" viewBox="0 0 12 7" fill="none" stroke="#fff" strokeWidth="1.200"><path d="M.5 6.500L6 1l5.500 5.500" /></svg></Slot>
        <Slot $w={21}><svg width="12" height="16" viewBox="0 0 12 16" fill="none" stroke="#fff" strokeWidth="1.100"><rect x=".6" y="4.500" width="7.500" height="7" rx="1" /><path d="M8 7l2.500-1.500v5L8 9M1.500 2.300c2-1.600 5-1.600 7 0M1.500 13.700c2 1.600 5 1.600 7 0" /></svg></Slot>
        <Slot $w={27}><svg width="16" height="11" viewBox="0 0 16 11"><path d="M3.500 10.500A3.500 3.500 0 0 1 3.500 4a5 5 0 0 1 9-.5 3.500 3.500 0 0 1 .5 7z" fill="#f2f2f2" /><path d="M3.500 4a5 5 0 0 1 9-.5L7 7z" fill="#b9bfc8" /></svg></Slot>
        <Slot $w={21}><svg width="13" height="13" viewBox="0 0 13 13" fill="none" stroke="#e4e7ec" strokeWidth="1.200"><path d="M1 12C1 6 6 1 12 1" stroke="#8d96a5" /><path d="M3.500 12.500c0-5 4-8.500 8.500-8.500M6.500 12.500C6.500 9.500 9 7 12 7M9.500 12.500c0-1.500 1-2.500 2.500-2.500" /></svg></Slot>
        <Slot $w={24}><svg width="16" height="12" viewBox="0 0 16 12" fill="none" stroke="#fff" strokeWidth="1.100"><path d="M6.500 2.500h7.500v7H5.500V7M14.500 4.500h1v3h-1M1.500 0v2.500M4.500 0v2.500M.5 2.500h5V5L4 6H2L.5 5zM3 6v4" /><path d="M7.500 5h2v2.500h-2z" fill="#fff" /></svg></Slot>
        <Slot $w={26}><svg width="17" height="14" viewBox="0 0 17 14" fill="none" stroke="#fff" strokeWidth="1.100"><path d="M1 5h2.500L7 1.500v11L3.500 9H1zM9 5c1 1.200 1 2.800 0 4M11.200 3.200c2 2.200 2 5.400 0 7.600" /><path d="M13.500 1.500c3 3.200 3 7.800 0 11" stroke="#8d96a5" /></svg></Slot>
        <Slot $w={22}><UiText $ls={-0.4}>ENG</UiText></Slot>
        <Clock>
          <UiText $ls={-0.5}>14:00</UiText>
          <UiText $ls={-0.5}>03-11-2023</UiText>
        </Clock>
        <Slot $w={28}>
          <svg width="28" height="26" viewBox="-2 -1 28 26"><path d="M1 2h16v12H8l-3 3v-3H1z" fill="#fff" /><path d="M4 5.500h10M4 8.500h10M4 11.500h6" stroke="#1a2843" /><circle cx="16.500" cy="17" r="7.500" fill="#2d3138" stroke="#8c929b" /><path d="M14.800 15l2-1.500V21" fill="none" stroke="#fff" strokeWidth="1.400" /></svg>
        </Slot>
        <DesktopEdge />
      </Taskbar>
    </Screen>
  );
}
